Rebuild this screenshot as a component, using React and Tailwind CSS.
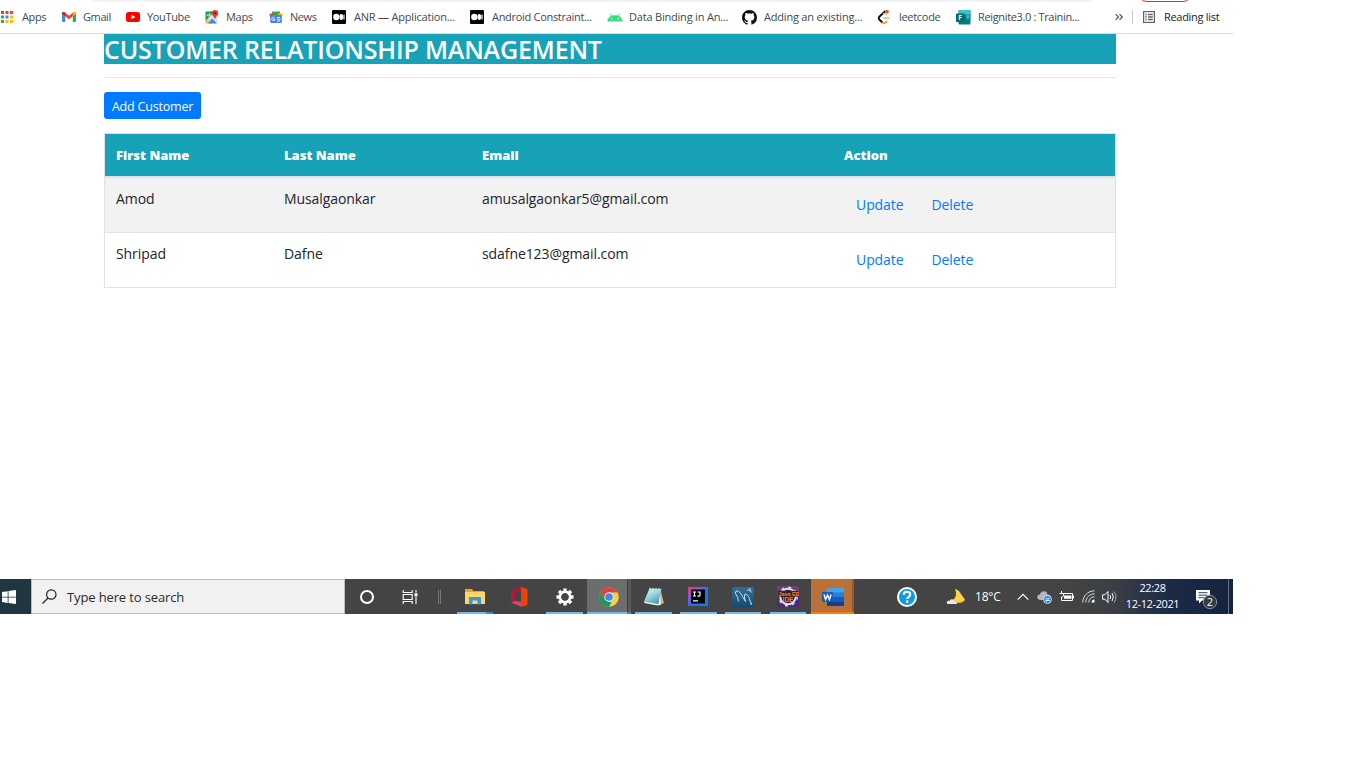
import React from "react";

const ui = "font-['Open_Sans','Noto_Sans',sans-serif]";

/* ---------- Bookmark icons ---------- */
const AppsIcon = () => (
  <svg width="14" height="14" viewBox="0 0 14 14" className="shrink-0">
    {["#ea4335", "#ea4335", "#ea4335", "#34a853", "#4285f4", "#fbbc05", "#34a853", "#fbbc05", "#fbbc05"].map((c, i) => (
      <rect key={i} x={1 + (i % 3) * 4.5} y={1 + Math.floor(i / 3) * 4.5} width="3" height="3" fill={c} />
    ))}
  </svg>
);
const GmailIcon = () => (
  <svg width="14" height="14" viewBox="0 0 14 14" className="shrink-0">
    <path d="M0 3.500V11a1 1 0 0 0 1 1h2.200V6z" fill="#4285f4" />
    <path d="M14 3.500V11a1 1 0 0 1-1 1h-2.200V6z" fill="#34a853" />
    <path d="M0 3.600C0 2 1.600 1.600 2.600 2.300L7 5.700l4.400-3.400C12.600 1.500 14 2.200 14 3.600L10.800 6.200 7 9.200 3.200 6.200z" fill="#ea4335" />
    <path d="M10.800 2.700v3.500L14 3.800C14 2 12.400 1.600 11.400 2.300z" fill="#fbbc04" />
    <path d="M3.200 2.700v3.500L0 3.800C0 2 1.600 1.600 2.600 2.300z" fill="#c5221f" />
  </svg>
);
const YouTubeIcon = () => (
  <svg width="14" height="14" viewBox="0 0 14 14" className="shrink-0">
    <rect x="0" y="2" width="14" height="10" rx="2.500" fill="#f00" />
    <path d="M5.500 4.800v4.400L9.400 7z" fill="#fff" />
  </svg>
);
const MapsIcon = () => (
  <svg width="14" height="16" viewBox="0 0 14 16" className="shrink-0">
    <rect x="0.500" y="2.500" width="12" height="12" rx="1" fill="#dfe3e8" />
    <path d="M1.500 2.500h8L.500 12V3.500a1 1 0 0 1 1-1z" fill="#1e9e54" />
    <path d="M.500 12.500 3 10l3.500 4.500h-5a1 1 0 0 1-1-1z" fill="#fbc02d" />
    <path d="M3 14.500 7 9.500l5 5z" fill="#4285f4" />
    <path d="M2 5.500a1.500 1.500 0 1 0 2.600-1M3.500 5.500h1.500" stroke="#fff" strokeWidth=".9" fill="none" />
    <path d="M10 1a3.300 3.300 0 0 0-3.300 3.300C6.700 6.500 9.300 7.500 10 10.500c.7-3 3.300-4 3.300-6.200A3.300 3.300 0 0 0 10 1z" fill="#db4437" />
    <circle cx="10" cy="4.300" r="1.300" fill="#8c1d18" />
  </svg>
);
const NewsIcon = () => (
  <svg width="14" height="14" viewBox="0 0 14 14" className="shrink-0">
    <path d="M3 1.500h8v4H3z" fill="#34a853" />
    <path d="M.3 4 4 3l1 4-3.500 1z" fill="#ea4335" />
    <path d="m9.700 3 4 1-1 4-4-1z" fill="#fbbc04" />
    <rect x="1.200" y="5" width="11.600" height="8" rx="1" fill="#4a86e8" />
    <path d="M5.800 8a1.600 1.600 0 1 0 .2 1.500H4.500M8 7.500h3M8 9.200h3.500M8 11h3" stroke="#fff" strokeWidth=".9" fill="none" />
  </svg>
);
const MediumIcon = () => (
  <svg width="14" height="14" viewBox="0 0 14 14" className="shrink-0">
    <rect width="14" height="14" rx="1" fill="#000" />
    <circle cx="4.300" cy="7" r="3.200" fill="#fff" />
    <ellipse cx="9.300" cy="7" rx="1.800" ry="2.900" fill="#fff" />
    <rect x="11.400" y="4.500" width="1.200" height="5" rx=".5" fill="#fff" />
  </svg>
);
const AndroidIcon = () => (
  <svg width="16" height="14" viewBox="0 0 16 14" className="shrink-0">
    <path d="M.3 11.500C.6 8 3.300 5.300 8 5.300s7.400 2.700 7.700 6.200z" fill="#3ddc84" />
    <path d="m3.200 3.500 1.700 3M12.800 3.500l-1.700 3" stroke="#3ddc84" strokeWidth=".9" />
    <circle cx="4.700" cy="8.800" r=".7" fill="#fff" />
    <circle cx="11.300" cy="8.800" r=".7" fill="#fff" />
  </svg>
);
const GithubIcon = () => (
  <svg width="15" height="15" viewBox="0 0 16 16" className="shrink-0">
    <path
      fill="#0d1117"
      d="M8 0C3.580 0 0 3.580 0 8c0 3.540 2.290 6.530 5.470 7.590.4.070.55-.17.55-.38 0-.19-.01-.82-.01-1.490-2.010.37-2.530-.49-2.690-.94-.09-.23-.48-.94-.82-1.130-.28-.15-.68-.52-.01-.53.63-.01 1.080.58 1.230.82.72 1.210 1.870.87 2.330.66.070-.52.28-.87.51-1.070-1.780-.2-3.640-.89-3.640-3.950 0-.87.310-1.590.82-2.150-.08-.2-.36-1.020.08-2.120 0 0 .67-.21 2.200.82.640-.18 1.320-.27 2-.27s1.360.09 2 .27c1.530-1.040 2.200-.82 2.200-.82.440 1.100.16 1.920.08 2.120.51.56.82 1.270.82 2.150 0 3.070-1.870 3.750-3.650 3.950.29.25.54.73.54 1.480 0 1.070-.01 1.930-.01 2.200 0 .21.15.46.55.38A8.010 8.010 0 0 0 16 8c0-4.420-3.580-8-8-8z"
    />
  </svg>
);
const LeetcodeIcon = () => (
  <svg width="14" height="16" viewBox="0 0 14 16" className="shrink-0">
    <path d="M8.500 2 2.500 7.500c-1 1-1 2.300 0 3.300L5.500 13.500" stroke="#111" strokeWidth="1.900" fill="none" />
    <path d="M5.300 13.500c1.200 1 2.500 1 3.700-.3l1-1" stroke="#ffa116" strokeWidth="1.800" fill="none" />
    <path d="M6 5c1.500-.8 3-.5 4 .8" stroke="#ffb74d" strokeWidth="1.600" fill="none" />
    <path d="M6 9h7" stroke="#c4c4c4" strokeWidth="1.700" />
    <circle cx="10" cy="2.600" r="1.900" fill="#e25555" />
  </svg>
);
const FormsIcon = () => (
  <svg width="15" height="15" viewBox="0 0 15 15" className="shrink-0">
    <rect x="2.500" y="0" width="12" height="14.500" rx="1" fill="#0a7c7f" />
    <path d="M3.500 0h10a1 1 0 0 1 1 1v3.500h-12V1a1 1 0 0 1 1-1z" fill="#37c6d0" />
    <path d="M10 4.500h4.500v5H10z" fill="#1a9ba1" />
    <circle cx="12" cy="6.500" r="1.200" fill="#37c6d0" />
    <rect x="0" y="3.500" width="8.500" height="8.500" rx=".8" fill="#036c70" />
    <text x="2.300" y="10.200" fontSize="6.800" fontWeight="700" fill="#fff" fontFamily="Open Sans">F</text>
  </svg>
);

const bookmarks = [
  { Icon: AppsIcon, label: "Apps", w: "w-[62px]", t: "tracking-[-0.35px]", gap: "gap-2" },
  { Icon: GmailIcon, label: "Gmail", w: "w-[64px]", t: "tracking-[-0.4px]", gap: "gap-[7px]" },
  { Icon: YouTubeIcon, label: "YouTube", w: "w-[79px]", t: "tracking-[-0.35px]", gap: "gap-[7px]" },
  { Icon: MapsIcon, label: "Maps", w: "w-[64px]", t: "tracking-[-0.3px]", gap: "gap-[7px]" },
  { Icon: NewsIcon, label: "News", w: "w-[63px]", t: "tracking-[-0.45px]", gap: "gap-[7px]" },
  { Icon: MediumIcon, label: "ANR — Application...", w: "w-[138px]", t: "tracking-[-0.2px]", gap: "gap-2" },
  { Icon: MediumIcon, label: "Android Constraint...", w: "w-[137px]", t: "tracking-[-0.3px]", gap: "gap-2" },
  { Icon: AndroidIcon, label: "Data Binding in An...", w: "w-[135px]", t: "tracking-[-0.2px]", gap: "gap-1.5" },
  { Icon: GithubIcon, label: "Adding an existing...", w: "w-[135px]", t: "tracking-[-0.2px]", gap: "gap-[7px]" },
  { Icon: LeetcodeIcon, label: "leetcode", w: "w-[79px]", t: "tracking-[-0.3px]", gap: "gap-2" },
  { Icon: FormsIcon, label: "Reignite3.0 : Trainin...", w: "w-[159px]", t: "tracking-[-0.35px]", gap: "gap-[7px]" },
];

function BookmarkBar() {
  return (
    <div className="relative h-[34px] w-[1233px] overflow-hidden border-b border-[#d9dbdd] pt-[2px]">
      <div className="absolute left-[91px] top-[-8px] h-[10px] w-[1002px] rounded-full bg-[#f1f3f4]" />
      <div className="absolute left-[1138px] top-[-16px] h-[18px] w-[54px] rounded-full border border-[#d93025]" />
      <div className="flex h-[30px] items-center text-[11px] leading-4 text-[#45494d]">
        {bookmarks.map(({ Icon, label, w, t, gap }) => (
          <div key={label} className={`flex shrink-0 items-center whitespace-nowrap ${w} ${t} ${gap}`}>
            <Icon />
            <span>{label}</span>
          </div>
        ))}
        <svg width="8" height="8" viewBox="0 0 8 8" className="shrink-0" fill="none" stroke="#5f6368" strokeWidth="1.300">
          <path d="m.7 1.200 2.800 2.800L.7 6.800M4.500 1.200 7.300 4 4.500 6.800" />
        </svg>
        <div className="ml-[9px] h-[14px] w-px bg-[#c6c9cc]" />
        <svg width="12" height="12" viewBox="0 0 12 12" className="ml-[10px] shrink-0" fill="none" stroke="#5f6368">
          <rect x=".6" y=".6" width="10.800" height="10.800" strokeWidth="1.200" />
          <path d="M2.300 3.500h1.500M2.300 6h1.500M2.300 8.500h1.500M5 3.500h4.800M5 6h4.800M5 8.500h4.800" strokeWidth="1.300" />
        </svg>
        <span className="ml-[9px] whitespace-nowrap tracking-[-0.3px] text-[#202124]">Reading list</span>
      </div>
    </div>
  );
}

/* ---------- Customer page ---------- */
const customers = [
  { first: "Amod", last: "Musalgaonkar", email: "amusalgaonkar5@gmail.com" },
  { first: "Shripad", last: "Dafne", email: "sdafne123@gmail.com" },
];

function CustomerPage() {
  return (
    <main className="ml-[104px] w-[1012px] text-[#212529]">
      <h1 className="h-[30px] whitespace-nowrap bg-[#17a2b8] text-[25px] font-semibold leading-[30px] tracking-[-0.16px] text-white">
        CUSTOMER RELATIONSHIP MANAGEMENT
      </h1>
      <hr className="mt-[13px] border-[#e5e5e5]" />
      <button className="mt-[14px] block h-[27px] w-[97px] whitespace-nowrap rounded-[3px] bg-[#007bff] text-center text-[12.5px] leading-[29px] tracking-[-0.2px] text-white">
        Add Customer
      </button>
      <div className="mt-[14px] border border-[#dee2e6] text-[14px]">
        <div className="grid h-[44px] grid-cols-[168px_198px_362px_1fr] border-b-2 border-[#dee2e6] bg-[#17a2b8] pl-[11px] text-[13px] font-extrabold leading-[43px] text-white">
          <span>First Name</span>
          <span>Last Name</span>
          <span>Email</span>
          <span>Action</span>
        </div>
        {customers.map((c, i) => (
          <div
            key={c.first}
            className={`grid grid-cols-[168px_198px_374px_1fr] pl-[11px] pt-[10px] tracking-[-0.08px] ${
              i === 0 ? "h-[55px] border-b border-[#dee2e6] bg-[#f2f2f2]" : "h-[54px]"
            }`}
          >
            <span>{c.first}</span>
            <span>{c.last}</span>
            <span>{c.email}</span>
            <span className="flex gap-[28px] pt-1.5 text-[#007bff]">
              <a>Update</a>
              <a>Delete</a>
            </span>
          </div>
        ))}
      </div>
    </main>
  );
}

/* ---------- Taskbar ---------- */
function Task({ w = "w-[45px]", bar, bg = "", children }) {
  return (
    <div className={`flex h-[35px] shrink-0 flex-col items-center ${w} ${bg}`}>
      <div className="flex h-[33px] items-center pt-0.5">{children}</div>
      {bar && <div className={`h-[2px] ${bar}`} />}
    </div>
  );
}

const ExplorerIcon = () => (
  <svg width="20" height="18" viewBox="0 0 20 18">
    <path d="M0 1h7l1.500 2H19v13H0z" fill="#e5a521" />
    <path d="M0 4h20v12H0z" fill="#ffd766" />
    <path d="M4 16.500V9h12v7.500h-3.500v-4h-5v4z" fill="#3a96dd" />
  </svg>
);
const OfficeIcon = () => (
  <svg width="18" height="20" viewBox="0 0 18 20">
    <path d="M11 0 1 3.800v12l4-1.800V5.500L11 3.800z" fill="#b5173b" />
    <path d="M1 15.500 5 14l6 .8V19.700z" fill="#d8436f" />
    <path d="m11 0 6.500 2v16L11 20z" fill="#e8440a" />
  </svg>
);
const GearIcon = () => (
  <svg width="18" height="18" viewBox="-9 -9 18 18">
    {[0, 45, 90, 135, 180, 225, 270, 315].map((a) => (
      <rect key={a} x="-1.700" y="-8.500" width="3.400" height="4" fill="#fff" transform={`rotate(${a})`} />
    ))}
    <circle r="5.200" fill="none" stroke="#fff" strokeWidth="2.600" />
  </svg>
);
const ChromeIcon = () => (
  <svg width="20" height="20" viewBox="0 0 20 20">
    <circle cx="10" cy="10" r="9.800" fill="#ffcd40" />
    <path d="M1.340 5A10 10 0 0 1 18.660 5.500H10L5.700 12.500z" fill="#db4437" />
    <path d="M1.340 5 5.700 12.500 10 15h2.500L10 19.900A10 10 0 0 1 1.340 5z" fill="#0f9d58" />
    <circle cx="10" cy="10" r="4.700" fill="#f1f1f1" />
    <circle cx="10" cy="10" r="3.800" fill="#4285f4" />
  </svg>
);
const NotepadIcon = () => (
  <svg width="20" height="20" viewBox="0 0 20 20">
    <defs>
      <linearGradient id="np" x1="0" y1="0" x2=".6" y2="1">
        <stop offset="0" stopColor="#d4f0f4" />
        <stop offset=".45" stopColor="#a3dbe5" />
        <stop offset="1" stopColor="#3f9fb3" />
      </linearGradient>
    </defs>
    <path d="m16.500 3 3.500 13-5.500 2.500z" fill="#c9ac80" />
    <path d="m16 3 1 14.500-3 1z" fill="#e8eef0" />
    <path d="M5.500 1.500 17.500 2l-3.500 15.500L0 14.500z" fill="url(#np)" />
    <path d="m0 14.500 14 2.500-.3 1.500L.3 16z" fill="#eef6f7" />
    <path d="M6 .8v1.500M9 .8v1.500M12 .9v1.500M15 1v1.500" stroke="#e8e8e8" />
  </svg>
);
const IntelliJIcon = () => (
  <svg width="20" height="19" viewBox="0 0 20 19">
    <defs>
      <linearGradient id="ij" x1="0" y1="0" x2="1" y2="1">
        <stop offset="0" stopColor="#fe315d" />
        <stop offset=".35" stopColor="#7b5be6" />
        <stop offset=".6" stopColor="#087cfa" />
      </linearGradient>
    </defs>
    <rect width="20" height="19" fill="url(#ij)" />
    <rect x="3" y="2.500" width="14" height="14" fill="#000" />
    <path d="M5 5h3M6.500 5v4M5 9h3M9.500 5h2.500v3.200q0 1-1.200 1H9.500M5 13.800h5" stroke="#fff" strokeWidth="1.200" fill="none" />
  </svg>
);
const MysqlIcon = () => (
  <svg width="22" height="20" viewBox="0 0 22 20">
    <defs>
      <linearGradient id="my" x1="0" y1="0" x2="0" y2="1">
        <stop offset="0" stopColor="#336f96" />
        <stop offset="1" stopColor="#184a70" />
      </linearGradient>
    </defs>
    <rect width="22" height="20" rx="2" fill="url(#my)" />
    <path d="M7 14.500C5.500 14 6.500 11 5 9S3 5 4 4.200C6.500 3.500 9 6 10.500 9.500l3 5" stroke="#c7e3f2" strokeWidth="1" fill="none" />
    <path d="M13.500 14.500c-1-3-1.500-6.500-.5-7.500 3 .3 4.500 4 5 7l1.800 3.200-1.600-.4" stroke="#c7e3f2" strokeWidth="1" fill="none" />
    <path d="m15 3 3.500.5L17.500 1M18.500 3.500l1 2" stroke="#c7e3f2" strokeWidth=".9" fill="none" />
  </svg>
);
const EclipseIcon = () => (
  <svg width="22" height="21" viewBox="0 0 22 21">
    <rect width="22" height="21" rx="1" fill="#4b2a78" />
    <rect width="22" height="10" rx="1" fill="#6b4675" />
    <circle cx="11" cy="10.500" r="7.800" fill="#2c2230" stroke="#e4e1e8" strokeWidth="2" />
    <circle cx="11" cy="10.500" r="9.300" fill="none" stroke="#e4e1e8" strokeWidth="1.300" strokeDasharray="3 4.300" />
    <rect x="1" y="4.800" width="20" height="5.800" fill="#33242c" />
    <text x="1.500" y="10" fontSize="5.400" fontWeight="700" fill="#f5821f" fontFamily="Liberation Sans">Java EE</text>
    <text x="11" y="15.800" textAnchor="middle" fontSize="6.500" fontWeight="700" fill="#f5821f" fontFamily="Liberation Sans">IDE</text>
  </svg>
);
const WordIcon = () => (
  <svg width="22" height="18" viewBox="0 0 22 18">
    <path d="M5 1a1 1 0 0 1 1-1h15a1 1 0 0 1 1 1v4H5z" fill="#41a5ee" />
    <path d="M5 4.500h17V9H5z" fill="#2b7cd3" />
    <path d="M5 9h17v4.500H5z" fill="#185abd" />
    <path d="M5 13.500h17V17a1 1 0 0 1-1 1H6a1 1 0 0 1-1-1z" fill="#103f91" />
    <rect x="0" y="4" width="11" height="10" rx=".8" fill="#185abd" />
    <path d="m2 6.500 1.600 5L5.500 7l1.900 4.500L9 6.500" stroke="#fff" strokeWidth="1.400" fill="none" />
  </svg>
);

function Taskbar() {
  return (
    <footer className="mt-[291px] flex h-[35px] w-[1233px] items-center overflow-hidden bg-[linear-gradient(to_right,#444_0,#444_1060px,#3b3f45_1115px,#1c2a47_1170px,#15233f_1233px)] text-white">
      <div className="flex h-[35px] w-[31px] shrink-0 items-center bg-[#1f3640] pl-[2px]">
        <svg width="14" height="14" viewBox="0 0 14 14" fill="#fff">
          <path d="M0 2 5.700 1.200v5.500H0zM6.500 1 14 0v6.700H6.500zM0 7.500h5.700v5.400L0 12.100zM6.500 7.500H14V14l-7.500-1z" />
        </svg>
      </div>
      <div className="flex h-[35px] w-[314px] shrink-0 items-center border border-[#bcbcbc] bg-[#f1f1f1] pl-[10px]">
        <svg width="15" height="15" viewBox="0 0 15 15" fill="none" stroke="#222" strokeWidth="1.200">
          <circle cx="9.300" cy="5.500" r="4.700" />
          <path d="M6 9 .5 14.500" />
        </svg>
        <span className="ml-[10px] whitespace-nowrap text-[13px] leading-5 tracking-[-0.13px] text-[#2b2b2b]">Type here to search</span>
      </div>
      <Task w="w-[43px]">
        <svg width="16" height="16" viewBox="0 0 16 16"><circle cx="8" cy="8" r="6" fill="none" stroke="#fff" strokeWidth="2" /></svg>
      </Task>
      <Task w="w-[44px]">
        <svg width="16" height="14" viewBox="0 0 16 14" fill="none" stroke="#fff" strokeWidth="1.100">
          <path d="M1.200 0v2.500h9V0M1.200 14v-2.500h9V14M1.200 4.500h9v5h-9zM14 0v2.500M14 6.500V14" />
          <rect x="12.500" y="3.200" width="3" height="3" fill="#fff" stroke="none" />
        </svg>
      </Task>
      <div className="ml-[6px] mr-[13px] h-[14px] w-[3px] shrink-0 border-x border-[#777]" />
      <Task w="w-[41px]" bar="w-[36px] bg-[linear-gradient(to_right,#76b9ed_29px,#4f86b3_29px)]"><ExplorerIcon /></Task>
      <Task w="w-[47px]"><OfficeIcon /></Task>
      <Task w="w-[45px]" bar="w-[37px] bg-[#76b9ed]"><GearIcon /></Task>
      <Task w="w-[44px]" bar="w-[44px] bg-[linear-gradient(to_right,#76b9ed_40px,#4f86b3_40px)]" bg="bg-[linear-gradient(to_right,#6d6d6d_40px,#3d3d3d_40px,#3d3d3d_41px,#595959_41px)]"><ChromeIcon /></Task>
      <Task w="w-[45px]" bar="w-[37px] bg-[#76b9ed]"><NotepadIcon /></Task>
      <Task w="w-[44px]" bar="w-[37px] bg-[#76b9ed]"><IntelliJIcon /></Task>
      <Task w="w-[45px]" bar="w-[36px] bg-[#76b9ed]"><MysqlIcon /></Task>
      <Task w="w-[45px]" bar="w-[36px] bg-[#76b9ed]"><EclipseIcon /></Task>
      <Task w="ml-px w-[43px]" bar="w-[43px] bg-[#ff7b0a]" bg="bg-[linear-gradient(to_right,#b87138_41px,#9a5a28_41px)]"><WordIcon /></Task>
      <svg width="20" height="20" viewBox="0 0 20 20" className="ml-[43px] mt-px shrink-0">
        <circle cx="10" cy="10" r="9" fill="#0d9be6" stroke="#fff" strokeWidth="2" />
        <path d="M6.800 7.800c0-4 6.400-4 6.400-.3 0 2.300-3 2.300-3 4.600M10.200 13.500v2.200" stroke="#fff" strokeWidth="2.200" fill="none" />
      </svg>
      <svg width="20" height="18" viewBox="0 0 20 18" className="ml-[29px] shrink-0">
        <path d="M9 1c5 1 6 6 10 10.500-2 4.500-9 4-12.500.5C10 10 11 6 9 1z" fill="#fcd34a" />
        <path d="M7 12.500c4 2.500 8 1.500 12-1-2 4.500-8 4-12 3z" fill="#e8a92b" />
        <path d="M1.500 16c-2-2 .5-3.700 2-3 1-3 5-2 5 .5 3-.2 3 2.500 1.500 2.500z" fill="#e5e8ee" />
      </svg>
      <span className="ml-[9px] w-[42px] shrink-0 whitespace-nowrap text-[12px] leading-5 tracking-[-0.2px]">18°C</span>
      <svg width="12" height="8" viewBox="0 0 12 8" className="shrink-0" fill="none" stroke="#fff" strokeWidth="1.200"><path d="M.7 6.700 6 1.400l5.300 5.300" /></svg>
      <svg width="15" height="14" viewBox="0 0 15 14" className="ml-[8px] mt-px shrink-0">
        <path d="M3 10C-1 9-.5 4.500 3 4.500 4 0 10 .5 10.500 4.500c2.500 0 4 2 3.500 5.500z" fill="#b5b8bc" />
        <circle cx="10.500" cy="9.500" r="4" fill="#1d7fd6" stroke="#e9f3fb" strokeWidth=".8" />
        <path d="M8.300 8.900h4l-1.200-1.200M12.700 10.500h-4l1.200 1.200" stroke="#fff" strokeWidth=".9" fill="none" />
      </svg>
      <svg width="15" height="12" viewBox="0 0 15 12" className="ml-[7px] shrink-0" fill="none" stroke="#fff">
        <path d="M2.500 0v2M.5 2.500h4v2q0 1.500-2 1.500V9.500M4.500 2.500h9M2.500 9.500h11M13.500 2.500v7M14.500 4.500v3" />
        <path d="M5 4.500h7.500v3.300H5z" fill="#fff" stroke="none" />
      </svg>
      <svg width="13" height="13" viewBox="0 0 13 13" className="ml-2 shrink-0" fill="none" stroke="#ddd">
        <path d="M.8 12.500C.8 6 6 .8 12.500.8M3.800 12.500c0-5 4-8.700 8.700-8.700M6.800 12.500c0-3.500 2.500-5.700 5.700-5.700" />
        <path d="M9.500 12.500c0-1.800 1.200-3 3-3v3z" fill="#fff" stroke="none" />
      </svg>
      <svg width="15" height="14" viewBox="0 0 15 14" className="ml-[7px] shrink-0" fill="none" stroke="#fff">
        <path d="M.6 4.800h2.200L6 1.500v11L2.800 9.200H.6zM8 5q1.300 2 0 4M10 3q2.700 4 0 8" />
        <path d="M12 1.500q4 5.500 0 11" stroke="#aaa" />
      </svg>
      <div className="mb-[2px] ml-[8px] flex h-[33px] w-[55px] shrink-0 flex-col items-center justify-center whitespace-nowrap text-[11px] leading-4 tracking-[-0.4px]">
        <span>22:28</span>
        <span>12-12-2021</span>
      </div>
      <svg width="22" height="22" viewBox="0 0 22 22" className="ml-[16px] mt-[7px] shrink-0">
        <path d="M0 1h14v10.500H6L3 14.500v-3H0z" fill="#fff" />
        <path d="M2.500 3.700h9M2.500 6.200h9M2.500 8.700h6" stroke="#36405a" />
        <circle cx="14" cy="13" r="6.700" fill="#343a42" stroke="#8b9099" />
        <text x="14" y="16.800" textAnchor="middle" fontSize="11" fill="#fff" fontFamily="Open Sans">2</text>
      </svg>
      <div className="ml-[10px] h-[35px] w-px shrink-0 bg-[#66718a]" />
    </footer>
  );
}

export default function App() {
  return (
    <div className={`h-[768px] w-[1366px] overflow-hidden bg-white ${ui}`}>
      <BookmarkBar />
      <CustomerPage />
      <Taskbar />
    </div>
  );
}
